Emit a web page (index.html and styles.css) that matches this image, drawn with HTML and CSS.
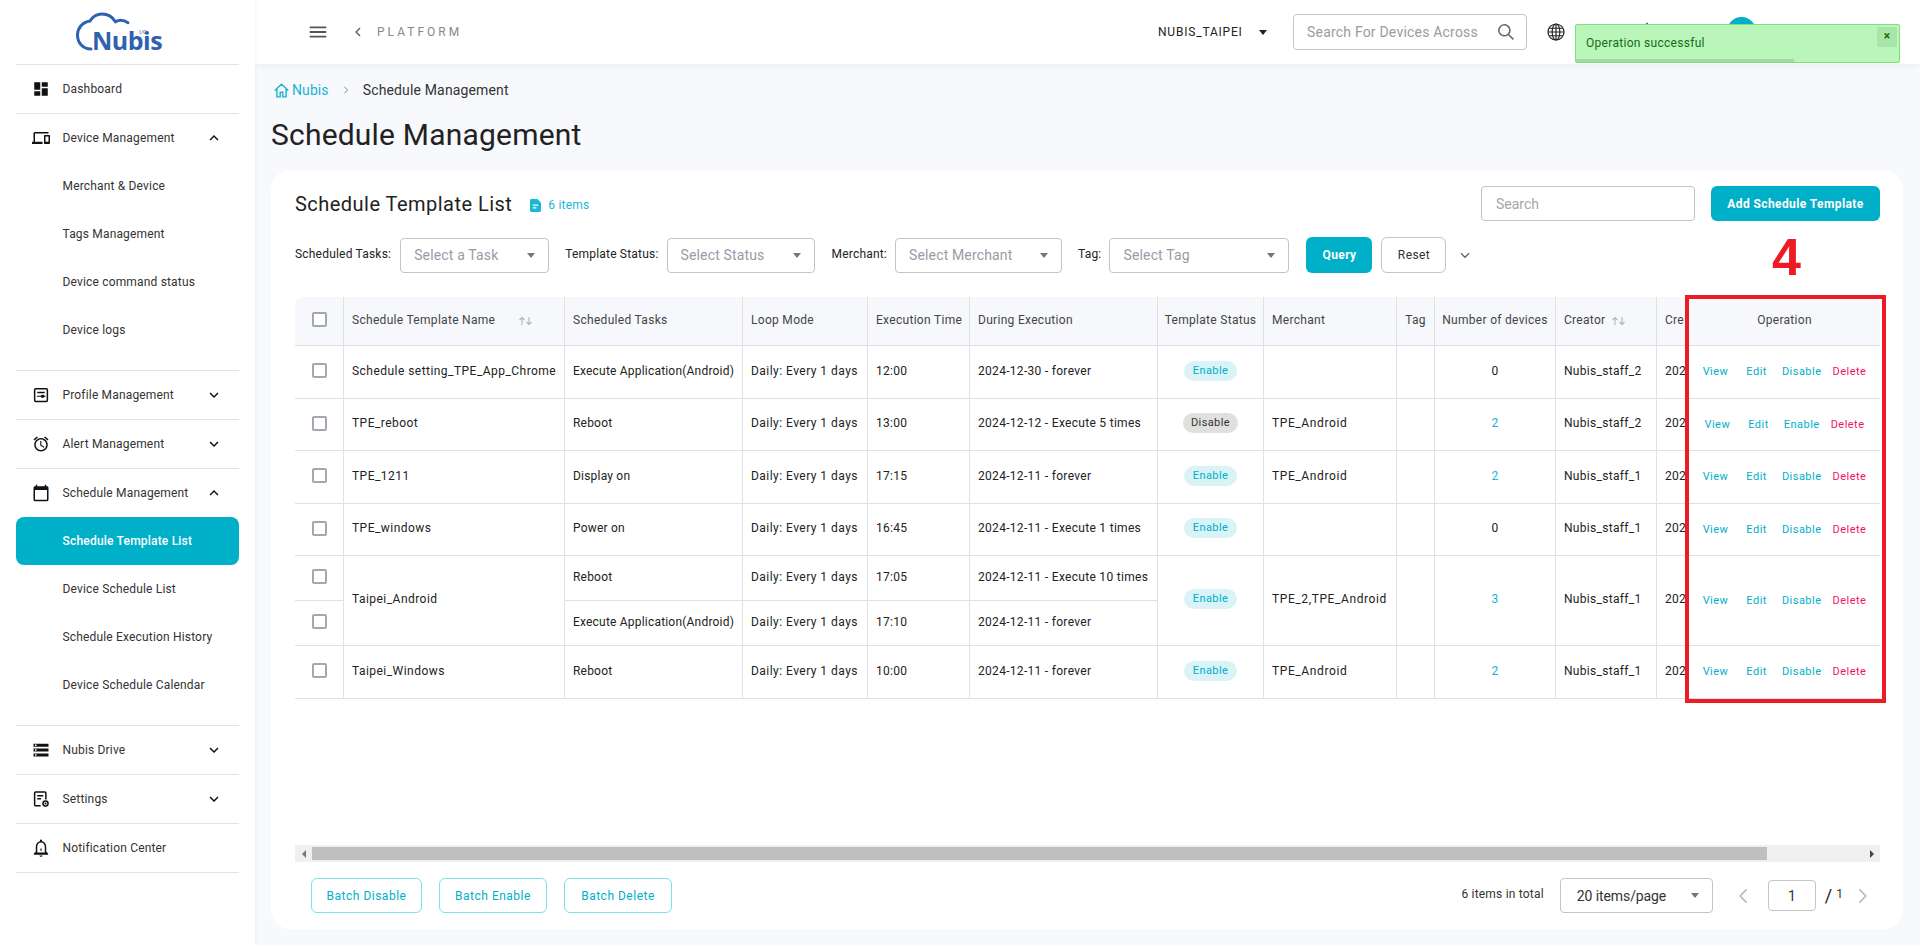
FILE: index.html
```html
<!DOCTYPE html>
<html lang="en">
<head>
<meta charset="utf-8">
<title>Schedule Management</title>
<link rel="stylesheet" href="styles.css">
</head>
<body>
<div class="app">
  <aside class="sidebar">
    <div class="logo">
      <svg class="logo-svg" width="100" height="50" viewBox="0 0 100 50">
        <path class="logo-cloud" d="M16 38C8 38 2.500 32 2.500 24 2.500 17 7.500 11 15 10 17.500 6 21 3 27 3c6 0 10.500 3 13.500 7.700C44 9 49 9 53 11.700"/>
        <text class="logo-text" x="17" y="39">Nubis</text>
        <text class="logo-io" x="64" y="23">I/O</text>
      </svg>
    </div>
    <a class="nav-item">
      <svg class="nav-icon" viewBox="0 0 24 24"><path d="M3 13h8V3H3v10zm0 8h8v-6H3v6zm10 0h8V11h-8v10zm0-18v6h8V3h-8z"/></svg>
      <span>Dashboard</span>
    </a>
    <div class="group group-device">
      <a class="nav-head">
        <svg class="nav-icon" viewBox="0 0 24 24"><path d="M4 6h18V4H4c-1.100 0-2 .9-2 2v11H0v3h14v-3H4V6zm19 2h-6c-.55 0-1 .45-1 1v10c0 .55.45 1 1 1h6c.55 0 1-.45 1-1V9c0-.55-.45-1-1-1zm-1 9h-4v-7h4v7z"/></svg>
        <span>Device Management</span>
        <svg class="nav-chev" viewBox="0 0 24 24"><path d="M7.410 15.410 12 10.830l4.590 4.580L18 14l-6-6-6 6z"/></svg>
      </a>
      <a class="sub">Merchant &amp; Device</a>
      <a class="sub">Tags Management</a>
      <a class="sub">Device command status</a>
      <a class="sub">Device logs</a>
    </div>
    <a class="nav-item">
      <svg class="nav-icon" viewBox="0 0 24 24"><path d="M5 2.500h14A2.500 2.500 0 0 1 21.500 5v14a2.500 2.500 0 0 1-2.500 2.500H5A2.500 2.500 0 0 1 2.500 19V5A2.500 2.500 0 0 1 5 2.500zm0 2a.5.5 0 0 0-.5.5v14a.5.5 0 0 0 .5.5h14a.5.5 0 0 0 .5-.5V5a.5.5 0 0 0-.5-.5H5zM7 7.500h10v2H7v-2zM6.500 13h5a2.800 2.200 0 0 1 5.300 0H18v1.400h-1.200a2.800 2.200 0 0 1-5.300 0h-5V13z"/></svg>
      <span>Profile Management</span>
      <svg class="nav-chev" viewBox="0 0 24 24"><path d="M7.410 8.590 12 13.170l4.590-4.580L18 10l-6 6-6-6z"/></svg>
    </a>
    <a class="nav-item">
      <svg class="nav-icon" viewBox="0 0 24 24"><path d="M22 5.720l-4.600-3.860-1.290 1.530 4.600 3.860L22 5.720zM7.880 3.390 6.600 1.860 2 5.710l1.290 1.530 4.590-3.850zM12.500 8H11v6l4.750 2.850.75-1.230-4-2.370V8zM12 4c-4.970 0-9 4.030-9 9s4.030 9 9 9 9-4.030 9-9-4.030-9-9-9zm0 16c-3.870 0-7-3.130-7-7s3.130-7 7-7 7 3.130 7 7-3.130 7-7 7z"/></svg>
      <span>Alert Management</span>
      <svg class="nav-chev" viewBox="0 0 24 24"><path d="M7.410 8.590 12 13.170l4.590-4.580L18 10l-6 6-6-6z"/></svg>
    </a>
    <div class="group group-schedule">
      <a class="nav-head">
        <svg class="nav-icon" viewBox="0 0 24 24"><path d="M20 3h-1V1h-2v2H7V1H5v2H4c-1.100 0-2 .9-2 2v16c0 1.100.9 2 2 2h16c1.100 0 2-.9 2-2V5c0-1.100-.9-2-2-2zm0 18H4V8h16v13z"/></svg>
        <span>Schedule Management</span>
        <svg class="nav-chev" viewBox="0 0 24 24"><path d="M7.410 15.410 12 10.830l4.590 4.580L18 14l-6-6-6 6z"/></svg>
      </a>
      <a class="sub active">Schedule Template List</a>
      <a class="sub">Device Schedule List</a>
      <a class="sub">Schedule Execution History</a>
      <a class="sub">Device Schedule Calendar</a>
    </div>
    <a class="nav-item">
      <svg class="nav-icon" viewBox="0 0 24 24"><path d="M2 20.500h20v-4H2v4zm2-3h2v2H4v-2zM2 3.500v4h20v-4H2zm4 3H4v-2h2v2zm-4 7.500h20v-4H2v4zm2-3h2v2H4v-2z"/></svg>
      <span>Nubis Drive</span>
      <svg class="nav-chev" viewBox="0 0 24 24"><path d="M7.410 8.590 12 13.170l4.590-4.580L18 10l-6 6-6-6z"/></svg>
    </a>
    <a class="nav-item">
      <svg class="nav-icon" viewBox="0 0 24 24"><path d="M5 1.500h12A2.500 2.500 0 0 1 19.500 4v8.600h-2V4a.5.5 0 0 0-.5-.5H5a.5.5 0 0 0-.5.5v15.500a.5.5 0 0 0 .5.5h6.500v2H5a2.500 2.500 0 0 1-2.500-2.500V4A2.500 2.500 0 0 1 5 1.500zM7 6.500h8v2H7v-2zm0 4h5v2H7v-2zm11 3.200a4.400 4.400 0 1 1 0 8.800 4.400 4.400 0 0 1 0-8.800zm0 2a2.400 2.400 0 1 0 0 4.800 2.400 2.400 0 0 0 0-4.800zm0 1.100a1.300 1.300 0 1 1 0 2.600 1.300 1.300 0 0 1 0-2.600z"/></svg>
      <span>Settings</span>
      <svg class="nav-chev" viewBox="0 0 24 24"><path d="M7.410 8.590 12 13.170l4.590-4.580L18 10l-6 6-6-6z"/></svg>
    </a>
    <a class="nav-item">
      <svg class="nav-icon" viewBox="0 0 24 24"><path d="M12 .8a1.500 1.500 0 0 1 1.500 1.500v.7C17 3.800 19 6.800 19 10.500V17l2.500 2.200V21h-19v-1.800L5 17v-6.500C5 6.800 7 3.800 10.500 3V2.300A1.500 1.500 0 0 1 12 .8zm0 4C9 4.800 7 7.300 7 10.500V18h10v-7.500c0-3.200-2-5.700-5-5.700zM10 22h4c0 1-.9 1.800-2 1.800S10 23 10 22zm1.200-9.500h1.600v3h-1.600v-3z"/></svg>
      <span>Notification Center</span>
    </a>
  </aside>

  <div class="main">
    <header class="topbar">
      <svg class="menu-icon" viewBox="0 0 24 24"><path d="M3 18h18v-2H3v2zm0-5h18v-2H3v2zm0-7v2h18V6H3z"/></svg>
      <svg class="back-icon" viewBox="0 0 24 24"><path d="M15.410 7.410 14 6l-6 6 6 6 1.410-1.410L10.830 12z"/></svg>
      <span class="platform">PLATFORM</span>
      <div class="top-right">
        <span class="org">NUBIS_TAIPEI</span>
        <i class="caret caret-dark"></i>
        <div class="top-search">
          <span class="top-search-text">Search For Devices Across</span>
          <svg class="search-icon" viewBox="0 0 24 24"><path d="M10 2.500a7.500 7.500 0 0 1 5.900 12.100l5.600 5.600-1.300 1.300-5.600-5.600A7.500 7.500 0 1 1 10 2.500zm0 1.800a5.700 5.700 0 1 0 0 11.400 5.700 5.700 0 0 0 0-11.400z"/></svg>
        </div>
        <svg class="globe-icon" viewBox="0 0 24 24"><circle cx="12" cy="12" r="9.600"/><ellipse cx="12" cy="12" rx="4.600" ry="9.600"/><path d="M12 2.400v19.200M2.400 12h19.200M3.800 7.500h16.400M3.800 16.500h16.400"/></svg>
        <svg class="top-bell" viewBox="0 0 24 24"><path d="M12 .8a1.500 1.500 0 0 1 1.500 1.500v.7C17 3.800 19 6.800 19 10.500V17l2.500 2.200V21h-19v-1.800L5 17v-6.500C5 6.800 7 3.800 10.500 3V2.300A1.500 1.500 0 0 1 12 .8z"/></svg>
        <span class="avatar"></span>
      </div>
    </header>

    <nav class="crumbs">
      <svg class="home-icon" viewBox="0 0 24 24"><path d="M2.500 12 12 3l9.500 9M5.500 10v11h4.700v-6.500h3.600V21h4.700V10"/></svg>
      <a class="crumb-link">Nubis</a>
      <svg class="crumb-sep" viewBox="0 0 24 24"><path d="M8.600 5.400 15.200 12l-6.600 6.600"/></svg>
      <span class="crumb-now">Schedule Management</span>
    </nav>
    <h1 class="page-title">Schedule Management</h1>

    <section class="card">
      <div class="card-head">
        <h2 class="card-title">Schedule Template List</h2>
        <svg class="doc-icon" viewBox="0 0 12 14"><path d="M1.500 0H8l4 4v8.500a1.500 1.500 0 0 1-1.500 1.500h-9A1.500 1.500 0 0 1 0 12.500v-11A1.500 1.500 0 0 1 1.500 0zM3 6v1.300h6V6H3zm0 3v1.300h4V9H3z"/></svg>
        <span class="count">6 items</span>
        <div class="card-search">Search</div>
        <button class="btn-primary btn-add">Add Schedule Template</button>
      </div>

      <div class="filters">
        <label class="f-label">Scheduled Tasks:</label>
        <div class="select s-task"><span>Select a Task</span><i class="caret"></i></div>
        <label class="f-label">Template Status:</label>
        <div class="select s-status"><span>Select Status</span><i class="caret"></i></div>
        <label class="f-label">Merchant:</label>
        <div class="select s-merchant"><span>Select Merchant</span><i class="caret"></i></div>
        <label class="f-label">Tag:</label>
        <div class="select s-tag"><span>Select Tag</span><i class="caret"></i></div>
        <button class="btn-primary btn-query">Query</button>
        <button class="btn-plain">Reset</button>
        <svg class="more-chev" viewBox="0 0 24 24"><path d="M6 9.500l6 6 6-6"/></svg>
      </div>

      <div class="table-wrap">
        <table class="grid">
          <colgroup>
            <col class="c-check"><col class="c-name"><col class="c-task"><col class="c-loop"><col class="c-exec"><col class="c-during"><col class="c-status"><col class="c-merchant"><col class="c-tag"><col class="c-num"><col class="c-creator"><col class="c-cre"><col class="c-op">
          </colgroup>
          <thead>
            <tr>
              <th class="center"><span class="box"></span></th>
              <th><span class="th-sort name-sort">Schedule Template Name<svg class="sort" viewBox="0 0 16 10"><path d="M4 9V1.500M1.500 4 4 1.500 6.500 4M11 1v7.500M8.500 6 11 8.500 13.500 6"/></svg></span></th>
              <th>Scheduled Tasks</th>
              <th>Loop Mode</th>
              <th>Execution Time</th>
              <th>During Execution</th>
              <th class="center">Template Status</th>
              <th>Merchant</th>
              <th class="center">Tag</th>
              <th class="center">Number of devices</th>
              <th><span class="th-sort">Creator<svg class="sort" viewBox="0 0 16 10"><path d="M4 9V1.500M1.500 4 4 1.500 6.500 4M11 1v7.500M8.500 6 11 8.500 13.500 6"/></svg></span></th>
              <th class="cut">Cre</th>
              <th class="center op-cell">Operation</th>
            </tr>
          </thead>
          <tbody>
            <tr class="r53">
              <td class="center"><span class="box"></span></td>
              <td class="t-name">Schedule setting_TPE_App_Chrome</td>
              <td class="t-task">Execute Application(Android)</td>
              <td class="t-loop">Daily: Every 1 days</td>
              <td>12:00</td>
              <td>2024-12-30 - forever</td>
              <td class="center"><span class="badge on">Enable</span></td>
              <td class="t-merch"></td><td></td>
              <td class="center">0</td>
              <td>Nubis_staff_2</td>
              <td class="cut">202</td>
              <td class="op-cell"><div class="ops"><a class="op op-view">View</a><a class="op op-edit">Edit</a><a class="op">Disable</a><a class="op del">Delete</a></div></td>
            </tr>
            <tr class="r52">
              <td class="center"><span class="box"></span></td>
              <td class="t-name">TPE_reboot</td>
              <td class="t-task">Reboot</td>
              <td class="t-loop">Daily: Every 1 days</td>
              <td>13:00</td>
              <td>2024-12-12 - Execute 5 times</td>
              <td class="center"><span class="badge off">Disable</span></td>
              <td class="t-merch">TPE_Android</td><td></td>
              <td class="center"><a class="num">2</a></td>
              <td>Nubis_staff_2</td>
              <td class="cut">202</td>
              <td class="op-cell"><div class="ops"><a class="op op-view">View</a><a class="op op-edit">Edit</a><a class="op">Enable</a><a class="op del">Delete</a></div></td>
            </tr>
            <tr class="r53">
              <td class="center"><span class="box"></span></td>
              <td class="t-name">TPE_1211</td>
              <td class="t-task">Display on</td>
              <td class="t-loop">Daily: Every 1 days</td>
              <td>17:15</td>
              <td>2024-12-11 - forever</td>
              <td class="center"><span class="badge on">Enable</span></td>
              <td class="t-merch">TPE_Android</td><td></td>
              <td class="center"><a class="num">2</a></td>
              <td>Nubis_staff_1</td>
              <td class="cut">202</td>
              <td class="op-cell"><div class="ops"><a class="op op-view">View</a><a class="op op-edit">Edit</a><a class="op">Disable</a><a class="op del">Delete</a></div></td>
            </tr>
            <tr class="r52">
              <td class="center"><span class="box"></span></td>
              <td class="t-name">TPE_windows</td>
              <td class="t-task">Power on</td>
              <td class="t-loop">Daily: Every 1 days</td>
              <td>16:45</td>
              <td>2024-12-11 - Execute 1 times</td>
              <td class="center"><span class="badge on">Enable</span></td>
              <td class="t-merch"></td><td></td>
              <td class="center">0</td>
              <td>Nubis_staff_1</td>
              <td class="cut">202</td>
              <td class="op-cell"><div class="ops"><a class="op op-view">View</a><a class="op op-edit">Edit</a><a class="op">Disable</a><a class="op del">Delete</a></div></td>
            </tr>
            <tr class="r45">
              <td class="center"><span class="box"></span></td>
              <td class="t-name" rowspan="2">Taipei_Android</td>
              <td class="t-task">Reboot</td>
              <td class="t-loop">Daily: Every 1 days</td>
              <td>17:05</td>
              <td>2024-12-11 - Execute 10 times</td>
              <td class="center" rowspan="2"><span class="badge on">Enable</span></td>
              <td class="t-merch" rowspan="2">TPE_2,TPE_Android</td>
              <td rowspan="2"></td>
              <td class="center" rowspan="2"><a class="num">3</a></td>
              <td rowspan="2">Nubis_staff_1</td>
              <td class="cut" rowspan="2">202</td>
              <td class="op-cell" rowspan="2"><div class="ops"><a class="op op-view">View</a><a class="op op-edit">Edit</a><a class="op">Disable</a><a class="op del">Delete</a></div></td>
            </tr>
            <tr class="r45">
              <td class="center"><span class="box"></span></td>
              <td class="t-task">Execute Application(Android)</td>
              <td class="t-loop">Daily: Every 1 days</td>
              <td>17:10</td>
              <td>2024-12-11 - forever</td>
            </tr>
            <tr class="r53">
              <td class="center"><span class="box"></span></td>
              <td class="t-name">Taipei_Windows</td>
              <td class="t-task">Reboot</td>
              <td class="t-loop">Daily: Every 1 days</td>
              <td>10:00</td>
              <td>2024-12-11 - forever</td>
              <td class="center"><span class="badge on">Enable</span></td>
              <td class="t-merch">TPE_Android</td><td></td>
              <td class="center"><a class="num">2</a></td>
              <td>Nubis_staff_1</td>
              <td class="cut">202</td>
              <td class="op-cell"><div class="ops"><a class="op op-view">View</a><a class="op op-edit">Edit</a><a class="op">Disable</a><a class="op del">Delete</a></div></td>
            </tr>
          </tbody>
        </table>
      </div>

      <div class="hscroll">
        <i class="arrow arrow-left"></i>
        <div class="thumb"></div>
        <div class="hscroll-rest"></div>
        <i class="arrow arrow-right"></i>
      </div>

      <div class="card-foot">
        <button class="btn-line">Batch Disable</button>
        <button class="btn-line">Batch Enable</button>
        <button class="btn-line">Batch Delete</button>
        <div class="pager">
          <span class="total">6 items in total</span>
          <div class="select s-page"><span>20 items/page</span><i class="caret"></i></div>
          <svg class="page-chev page-prev" viewBox="0 0 24 24"><path d="M15 4l-7.500 8 7.500 8"/></svg>
          <div class="page-input">1</div>
          <span class="slash">/</span>
          <span class="page-total">1</span>
          <svg class="page-chev page-next" viewBox="0 0 24 24"><path d="M9 4l7.500 8L9 20"/></svg>
        </div>
      </div>

      <div class="mark-box"></div>
      <div class="mark-num">4</div>
    </section>
  </div>

  <div class="toast">
    <span class="toast-text">Operation successful</span>
    <span class="toast-close">×</span>
    <div class="toast-bar"></div>
  </div>
</div>
</body>
</html>
```

FILE: styles.css
```css
* { box-sizing: border-box; }
html, body { margin: 0; height: 100%; }
body { font-family: Roboto, "Liberation Sans", sans-serif; color: #222; overflow: hidden; background: #f7f9fd; }
.app { display: flex; height: 945px; width: 1920px; position: relative; }

/* sidebar */
.sidebar { width: 255px; flex: none; background: #fff; padding: 0 16px; box-shadow: 1px 0 3px rgba(0,0,0,.05); position: relative; z-index: 3; }
.logo { height: 65px; border-bottom: 1px solid #e3e3e3; display: flex; padding: 11px 0 0 59px; }
.logo-cloud { fill: none; stroke: #2f62ae; stroke-width: 3; stroke-linecap: round; }
.logo-text { font-family: "Open Sans", sans-serif; font-weight: 700; font-size: 25px; fill: #2f62ae; letter-spacing: -.5px; }
.logo-io { font-family: Roboto, sans-serif; font-size: 6px; fill: #2f62ae; }
.nav-item { display: flex; align-items: center; height: 49px; border-bottom: 1px solid #e3e3e3; padding-left: 16px; font-size: 12px; letter-spacing: .17px; color: #333; }
.nav-head { display: flex; align-items: center; height: 48.400px; padding-left: 16px; font-size: 12px; letter-spacing: .17px; color: #333; }
.nav-icon { width: 18px; height: 18px; flex: none; margin-right: 12.500px; fill: #111; }
.nav-chev { width: 18px; height: 18px; margin-left: auto; margin-right: 16px; fill: #111; }
.group { border-bottom: 1px solid #e3e3e3; }
.group-device { padding-bottom: 15.300px; }
.group-schedule { padding-bottom: 16px; }
.sub { display: flex; align-items: center; height: 48px; padding-left: 46.500px; font-size: 12px; letter-spacing: .17px; color: #333; }
.sub.active { background: #00afc8; color: #fff; font-weight: 500; border-radius: 8px; letter-spacing: .2px; }

/* main */
.main { flex: 1; min-width: 0; display: flex; flex-direction: column; }
.topbar { height: 64px; flex: none; background: #fff; display: flex; align-items: center; padding-left: 52px; box-shadow: 0 2px 8px rgba(0,0,0,.05); }
.menu-icon { width: 22px; height: 22px; fill: #555; }
.back-icon { width: 18px; height: 18px; fill: #666; margin-left: 20px; }
.platform { font-size: 12px; letter-spacing: 3px; color: #888; margin-left: 10px; }
.top-right { margin-left: auto; display: flex; align-items: center; padding-right: 164px; }
.org { font-size: 12px; letter-spacing: .8px; color: #222; width: 86px; white-space: nowrap; }
.caret { display: inline-block; width: 0; height: 0; border-left: 4.500px solid transparent; border-right: 4.500px solid transparent; border-top: 5px solid #777; flex: none; }
.caret-dark { border-top-color: #222; margin-left: 15px; }
.top-search { width: 234px; height: 36px; margin-left: 26px; border: 1px solid #c4c4c4; border-radius: 4px; display: flex; align-items: center; padding: 0 10px 0 13px; }
.top-search-text { font-size: 14px; color: #9b9b9b; letter-spacing: .2px; white-space: nowrap; }
.search-icon { width: 20px; height: 20px; fill: #666; margin-left: auto; flex: none; }
.globe-icon { width: 20px; height: 20px; margin-left: 19px; fill: none; stroke: #222; stroke-width: 1.400; }
.top-bell { width: 20px; height: 20px; margin-left: 71px; fill: #666; }
.avatar { width: 29px; height: 29px; border-radius: 50%; background: #00afc8; margin-left: 70px; margin-top: -1px; }

.crumbs { display: flex; align-items: center; height: 20px; margin: 16px 0 0 18px; font-size: 14px; flex: none; }
.home-icon { width: 17px; height: 17px; fill: none; stroke: #1ab4d2; stroke-width: 2; margin-right: 2px; }
.crumb-link { color: #1ab4d2; letter-spacing: .1px; }
.crumb-sep { width: 12px; height: 12px; margin: 0 11px 0 11px; fill: none; stroke: #888; stroke-width: 2; }
.crumb-now { color: #333; letter-spacing: .15px; }
.page-title { margin: 10px 0 0 16px; font-size: 30px; font-weight: 400; line-height: 50px; height: 50px; flex: none; color: #222; letter-spacing: .2px; }

.card { position: relative; flex: none; height: 759px; margin: 10px 17px 0 16px; background: #fff; border-radius: 20px; padding: 16px 23px 16px 24px; display: flex; flex-direction: column; }
.card-head { display: flex; align-items: center; height: 35px; flex: none; }
.card-title { margin: 0; font-size: 20px; font-weight: 400; color: #222; letter-spacing: .47px; }
.doc-icon { width: 11px; height: 13px; margin-left: 18px; margin-top: 3px; fill: #1ab9d3; }
.count { font-size: 12px; color: #1ab9d3; margin-left: 7px; margin-top: 3px; letter-spacing: .2px; }
.card-search { margin-left: auto; width: 214px; height: 35px; border: 1px solid #c4c4c4; border-radius: 4px; font-size: 14px; color: #a5a5a5; display: flex; align-items: center; padding-left: 14px; }
.btn-primary { border: 0; background: #00afc8; color: #fff; border-radius: 6px; font: 700 12px Roboto, sans-serif; letter-spacing: .4px; }
.btn-add { width: 169px; height: 35px; margin-left: 16px; }

.filters { display: flex; align-items: center; height: 36px; margin-top: 16px; flex: none; }
.f-label { font-size: 12px; color: #222; letter-spacing: .2px; margin-top: -2px; }
.select { display: flex; align-items: center; justify-content: space-between; height: 35px; border: 1px solid #c4c4c4; border-radius: 4px; padding: 0 13px; font-size: 14px; letter-spacing: .15px; color: #9a9aa8; }
.s-task { width: 149px; margin: 0 16px 0 9px; }
.s-status { width: 148px; margin: 0 17px 0 8px; }
.s-merchant { width: 167px; margin: 0 16px 0 8px; }
.s-tag { width: 180px; margin: 0 17px 0 8px; }
.btn-query { width: 66px; height: 36px; }
.btn-plain { width: 65px; height: 36px; margin-left: 9px; border: 1px solid #c4c4c4; border-radius: 6px; background: #fff; font: 400 12px Roboto, sans-serif; color: #333; letter-spacing: .4px; }
.more-chev { width: 16px; height: 16px; margin-left: 11px; fill: none; stroke: #666; stroke-width: 2; }

.table-wrap { flex: 1; margin-top: 24px; min-height: 0; }
.grid { width: 1585px; table-layout: fixed; border-collapse: separate; border-spacing: 0; font-size: 12px; letter-spacing: .3px; }
.c-check { width: 49px; } .c-name { width: 221px; } .c-task { width: 178px; } .c-loop { width: 125px; }
.c-exec { width: 102px; } .c-during { width: 188px; } .c-status { width: 106px; } .c-merchant { width: 133px; }
.c-tag { width: 38px; } .c-num { width: 121px; } .c-creator { width: 101px; } .c-cre { width: 32px; } .c-op { width: 191px; }
.grid th, .grid td { border-right: 1px solid #e0e0e0; border-bottom: 1px solid #e0e0e0; padding: 0 0 3px 8px; text-align: left; white-space: nowrap; overflow: hidden; }
.grid th { height: 49px; background: #f7f8fc; font-weight: 400; color: #444; }
.grid th:first-child { border-top-left-radius: 8px; }
.grid .op-cell { border-right: 0; padding: 0 0 3px 0; }
.grid th.op-cell { border-top-right-radius: 8px; }
.grid .center { text-align: center; padding-left: 0; padding-right: 0; }
.grid .cut { padding-right: 0; }
.grid .t-name { letter-spacing: .46px; }
.grid .t-task { letter-spacing: .2px; }
.grid .t-loop { letter-spacing: .46px; }
.grid .t-merch { letter-spacing: .6px; }
.r53 td { height: 53px; }
.r52 td { height: 52px; }
.r45 td { height: 45px; }
.box { display: inline-block; width: 15px; height: 15px; border: 2px solid #a6a6b0; border-radius: 2px; background: #fff; vertical-align: middle; }
.th-sort { display: inline-flex; align-items: center; }
.sort { width: 16px; height: 10px; margin-left: 6px; margin-top: 2px; fill: none; stroke: #b5b5b5; stroke-width: 1.100; }
.name-sort .sort { margin-left: 23px; }
.badge { display: inline-block; width: 53px; height: 20px; line-height: 20px; border-radius: 10px; font-size: 11px; text-align: center; letter-spacing: .4px; vertical-align: middle; }
.badge.on { background: #d9f3f7; color: #00afc8; }
.badge.off { background: #e0e0e0; color: #333; width: 55px; }
.num { color: #1ab4d2; }
.ops { display: flex; justify-content: center; gap: 11px; font-size: 11px; letter-spacing: .48px; padding-top: 2px; }
.op { color: #00afc8; }
.op-view { margin-right: 7px; }
.op-edit { margin-right: 4px; }
.op.del { color: #f0135f; }

.hscroll { display: flex; height: 17px; background: #f0f0f0; flex: none; }
.arrow { width: 17px; flex: none; display: flex; align-items: center; justify-content: center; }
.arrow::before { content: ""; border-top: 4px solid transparent; border-bottom: 4px solid transparent; }
.arrow-left::before { border-right: 4px solid #777; }
.arrow-right::before { border-left: 4px solid #444; }
.thumb { width: 1455px; margin: 2px 0; background: #bfbfbf; flex: none; }
.hscroll-rest { flex: 1; }

.card-foot { display: flex; align-items: center; height: 35px; margin-top: 16px; padding-left: 16px; flex: none; }
.btn-line { height: 35px; padding: 0; background: #fff; border: 1px solid #7ddfe8; border-radius: 6px; color: #00afc8; font: 400 12px Roboto, sans-serif; letter-spacing: .5px; margin-right: 17px; width: 111px; }
.btn-line + .btn-line { width: 108px; }
.pager { margin-left: auto; display: flex; align-items: center; }
.total { font-size: 12px; color: #333; letter-spacing: .2px; margin-right: 16px; margin-top: -4px; }
.s-page { width: 153px; color: #333; padding-left: 16px; letter-spacing: -.1px; }
.page-chev { width: 20px; height: 20px; fill: none; stroke: #bbb; stroke-width: 2; }
.page-prev { margin-left: 21px; }
.page-input { width: 48px; height: 31px; margin-left: 14px; border: 1px solid #c4c4c4; border-radius: 4px; font-size: 14px; color: #333; display: flex; align-items: center; justify-content: center; }
.slash { font-size: 18px; color: #222; margin-left: 9px; }
.page-total { font-size: 12px; color: #333; margin-left: 4px; margin-top: -4px; }
.page-next { margin-left: 9px; margin-right: 8px; }

.mark-box { position: absolute; left: 1414px; top: 125px; width: 201px; height: 408px; border: 4px solid #ed1c24; pointer-events: none; }
.mark-num { position: absolute; left: 1501px; top: 57px; font: 700 52px/60px "Liberation Sans", sans-serif; color: #ed1c24; }

.toast { position: absolute; left: 1575px; top: 24px; width: 325px; height: 39px; background: #baf6ba; border: 1px solid #7fe07f; border-radius: 2px; z-index: 5; font-size: 12px; color: #146c14; letter-spacing: .3px; }
.toast-text { position: absolute; left: 10px; top: 11px; }
.toast-close { position: absolute; right: 2px; top: 2px; width: 20px; height: 20px; background: #a9e5a9; border-radius: 2px; text-align: center; font-weight: 700; line-height: 18px; }
.toast-bar { position: absolute; left: 0; bottom: 0; height: 3px; width: 218px; background: #a5d8a5; }
```
